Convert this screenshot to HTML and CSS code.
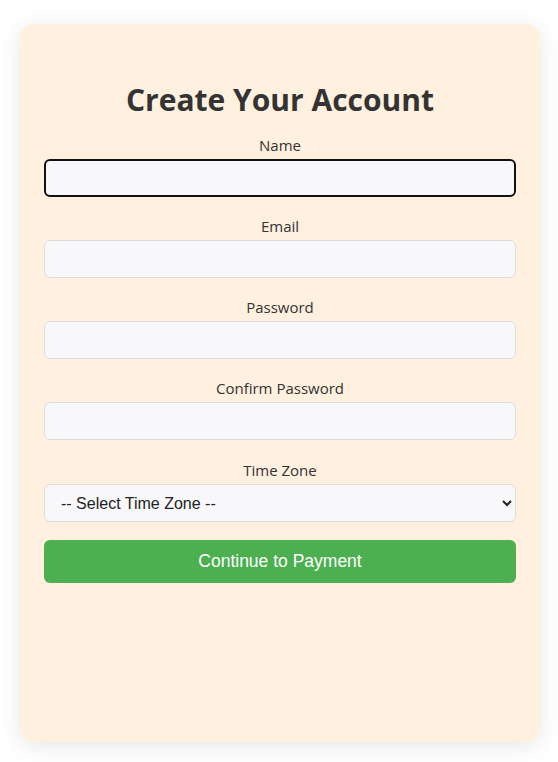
FILE: index.html
```html
<!DOCTYPE html>
<html lang="en">
<head>
<meta charset="utf-8">
<title>Create Your Account</title>
<link rel="stylesheet" href="styles.css">
</head>
<body>
<main class="card">
  <h2 class="title">Create Your Account</h2>
  <form class="form">
    <div class="field">
      <label class="label" for="name">Name</label>
      <input class="input is-focused" id="name" type="text">
    </div>
    <div class="field">
      <label class="label" for="email">Email</label>
      <input class="input" id="email" type="email">
    </div>
    <div class="field">
      <label class="label" for="password">Password</label>
      <input class="input" id="password" type="password">
    </div>
    <div class="field">
      <label class="label" for="confirm">Confirm Password</label>
      <input class="input" id="confirm" type="password">
    </div>
    <div class="field field-select">
      <label class="label" for="tz">Time Zone</label>
      <select class="input select" id="tz">
        <option>-- Select Time Zone --</option>
      </select>
    </div>
    <button class="submit" type="button">Continue to Payment</button>
  </form>
</main>
</body>
</html>
```
FILE: styles.css
```css
html, body {
  margin: 0;
  padding: 0;
  background: #ffffff;
}
body {
  padding: 24px 20px 20px;
  font-family: "Open Sans", "Noto Sans", sans-serif;
  color: #333333;
}
.card {
  box-sizing: border-box;
  width: 520px;
  height: 718px;
  background: #fff0df;
  border-radius: 14px;
  box-shadow: 0 4px 22px rgba(0, 0, 0, 0.10);
  padding: 56px 24px 24px;
}
.title {
  margin: 0 0 15px;
  text-align: center;
  font-size: 30px;
  line-height: 40px;
  font-weight: 700;
  color: #333333;
}
.form {
  display: flex;
  flex-direction: column;
}
.field {
  display: flex;
  flex-direction: column;
  margin-bottom: 19px;
}
.field-select {
  margin-top: 1px;
  margin-bottom: 18px;
}
.label {
  text-align: center;
  font-size: 15px;
  line-height: 20px;
  margin-bottom: 4px;
  color: #333333;
}
.input {
  box-sizing: border-box;
  height: 38px;
  width: 100%;
  margin: 0;
  border: 1px solid #dddddd;
  border-radius: 6px;
  background: #f8f8fa;
  font-family: "Liberation Sans", Arial, sans-serif;
  font-size: 16px;
  color: #222222;
  padding: 0 12px;
  outline: none;
}
.is-focused {
  border: 2px solid #111111;
}
.select {
  height: 38px;
  padding: 0 12px;
}
.submit {
  height: 43px;
  border: none;
  border-radius: 6px;
  background: #4caf50;
  color: #ffffff;
  font-family: "Liberation Sans", Arial, sans-serif;
  font-size: 17.5px;
  cursor: pointer;
}
```
